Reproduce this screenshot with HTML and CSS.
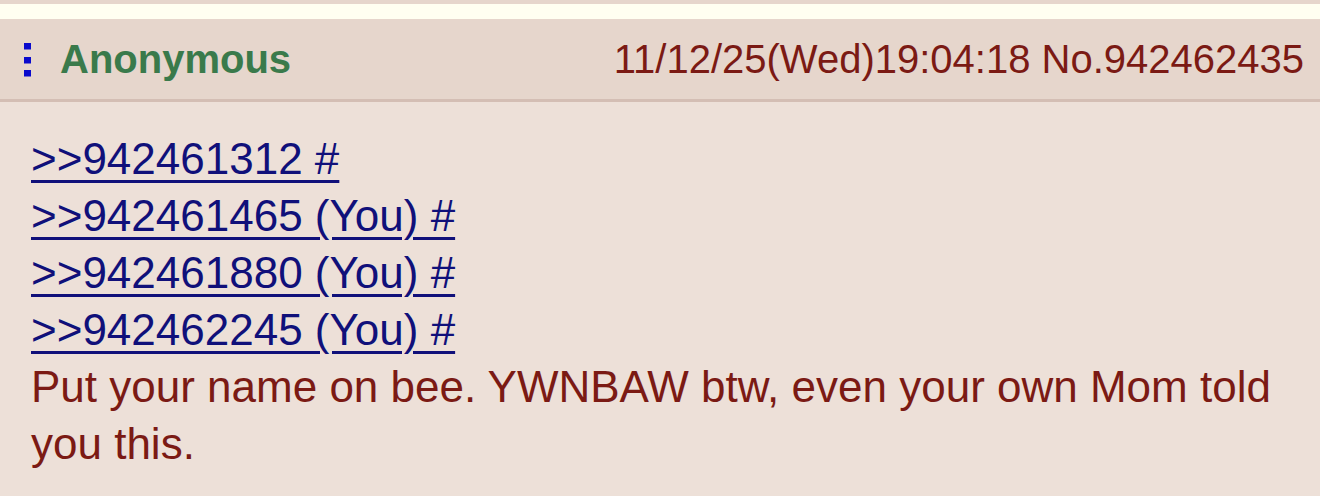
FILE: index.html
```html
<!DOCTYPE html>
<html lang="en">
<head>
  <meta charset="UTF-8">
  <meta name="viewport" content="width=device-width, initial-scale=1.0">
  <title>Thread</title>
  <link rel="stylesheet" href="styles.css">
</head>
<body>
  <div class="prev-edge"></div>
  <div class="gap"></div>

  <div class="post">
    <div class="post-head">
      <div class="poster">
        <svg class="menu-dots" width="7" height="34" viewBox="0 0 7 34">
          <rect x="0" y="0" width="7" height="6.5" fill="#0a0acc"/>
          <rect x="0" y="14" width="7" height="6.5" fill="#0a0acc"/>
          <rect x="0" y="27" width="7" height="6.5" fill="#0a0acc"/>
        </svg>
        <span class="name">Anonymous</span>
      </div>
      <span class="date">11/12/25(Wed)19:04:18 No.942462435</span>
    </div>

    <div class="post-body">
      <a href="#p942461312">&gt;&gt;942461312 #</a><br>
      <a href="#p942461465">&gt;&gt;942461465 (You) #</a><br>
      <a href="#p942461880">&gt;&gt;942461880 (You) #</a><br>
      <a href="#p942462245">&gt;&gt;942462245 (You) #</a><br>
      Put your name on bee. YWNBAW btw, even your own Mom told you this.
    </div>
  </div>
</body>
</html>
```

FILE: styles.css
```css
body { margin: 0; background: #ede0d8; font-family: "Liberation Sans", Arial, sans-serif; }
.prev-edge { height: 4px; background: #e6d6cc; }
.gap { height: 15px; background: #fffff1; }
.post-head { height: 80px; background: #e6d6cc; border-bottom: 3px solid #d4beb4; display: flex; align-items: center; justify-content: space-between; padding: 0 16px 0 24px; font-size: 40px; }
.poster { display: flex; align-items: center; gap: 29px; }
.menu-dots { display: block; margin-top: 1px; }
.name { color: #3a7a4b; font-weight: bold; }
.date { color: #7b1a14; }
.post-body { padding: 28px 40px 20px 31px; font-size: 44px; line-height: 57px; color: #7b1a14; }
.post-body a { color: #10107a; text-decoration-thickness: 3px; text-underline-offset: 6px; }
```
